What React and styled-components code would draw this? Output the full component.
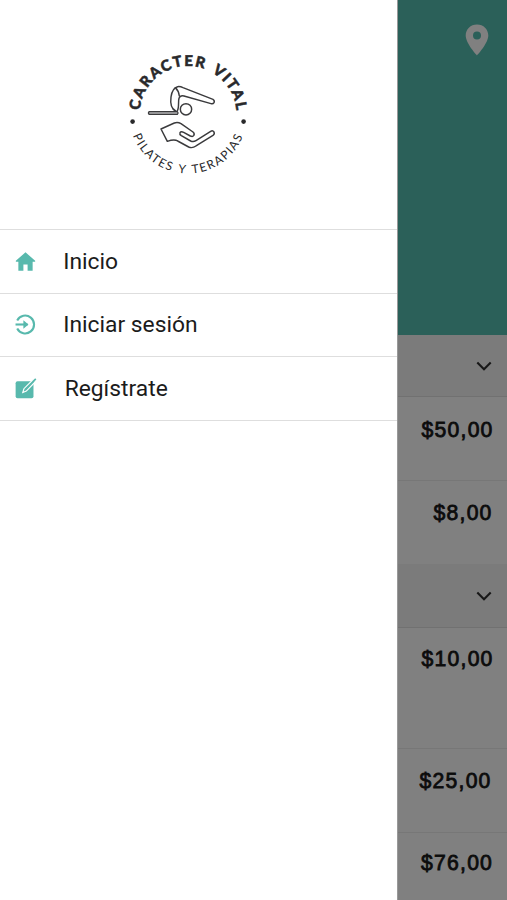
import styled, { createGlobalStyle } from "styled-components";

const GlobalStyle = createGlobalStyle`
  * { box-sizing: border-box; }
  body { margin: 0; background: #808080; overflow: hidden; }
`;

const opciones = [
  { titulo: "Inicio", icono: <IconoInicio /> },
  { titulo: "Iniciar sesión", icono: <IconoSesion /> },
  { titulo: "Regístrate", icono: <IconoRegistro />, sangria: 65 },
];

const secciones = [
  {
    alto: 62,
    precios: [
      { valor: "$50,00", alto: 84, margen: 14, arriba: 20 },
      { valor: "$8,00", alto: 83, margen: 15, sinBorde: true },
    ],
  },
  {
    alto: 64,
    precios: [
      { valor: "$10,00", alto: 121, margen: 14, arriba: 18 },
      { valor: "$25,00", alto: 84, margen: 16 },
      { valor: "$76,00", alto: 84, margen: 14.5, arriba: 17 },
    ],
  },
];

export default function App() {
  return (
    <>
      <GlobalStyle />
      <Pantalla>
        <Menu>
          <Cabecera>
            <Logo />
          </Cabecera>
          <Lista>
            {opciones.map((op) => (
              <Opcion key={op.titulo}>
                {op.icono}
                <Titulo $sangria={op.sangria}>{op.titulo}</Titulo>
              </Opcion>
            ))}
          </Lista>
        </Menu>
        <Fondo>
          <Portada>
            <IconoUbicacion />
          </Portada>
          {secciones.map((seccion, i) => (
            <section key={i}>
              <Encabezado $alto={seccion.alto}>
                <IconoFlecha />
              </Encabezado>
              {seccion.precios.map((p) => (
                <Precio
                  key={p.valor}
                  $alto={p.alto}
                  $margen={p.margen}
                  $arriba={p.arriba}
                  $sinBorde={p.sinBorde}
                >
                  {p.valor}
                </Precio>
              ))}
            </section>
          ))}
        </Fondo>
      </Pantalla>
    </>
  );
}

/* ── Iconos ────────────────────────────────────── */

function Logo() {
  return (
    <LogoSvg viewBox="0 0 136 136">
      <defs>
        <path
          id="arcoSuperior"
          d="M19.7 65.4 A48.5 48.5 0 0 1 68 21 A48.5 48.5 0 0 1 116.3 65.4"
        />
        <path id="arcoInferior" d="M12.9 90.6 A59 59 0 0 0 123.1 90.6" />
      </defs>
      <text fontSize="15" fontWeight="900" wordSpacing="2.5" stroke="#29292b" strokeWidth=".5">
        <textPath href="#arcoSuperior" textLength="144">CARACTER VITAL</textPath>
      </text>
      <text fontSize="12" wordSpacing="1.5">
        <textPath href="#arcoInferior" textLength="141">PILATES Y TERAPIAS</textPath>
      </text>
      <circle cx="12.6" cy="76.6" r="2.3" />
      <circle cx="123.6" cy="76.6" r="2.3" />
      <g
        transform="translate(25 35) scale(.3333)"
        fill="none"
        stroke="#3b3b3d"
        strokeWidth="4.4"
        strokeLinejoin="round"
        strokeLinecap="round"
      >
        <path d="M13 95H97Q101 99 97 103H13Q8 99 13 95Z" />
        <path d="M13 99H97" strokeWidth="2" stroke="#8a8a8c" />
        <path d="M92 93C78 86 76 66 78 51C80 36 85 23 98 20Q106 19 114 23L204 58Q210 62 207 68Q204 73 198 71L117 48Q106 45 102 55C99 65 103 83 97 92" />
        <path d="M91 23Q101 32 103 48" />
        <circle cx="123" cy="88" r="17" />
        <path d="M48 147L88 129Q98 125 108 131L144 156Q150 161 146 167Q143 171 136 168L116 157Q108 153 105 158Q103 163 109 167L137 183Q145 187 153 182L197 154Q203 150 207 156Q210 162 204 166L153 198Q142 206 131 201L98 183Q88 177 67 184Z" />
      </g>
    </LogoSvg>
  );
}

function IconoInicio() {
  return (
    <Icono viewBox="0 0 20 20">
      <path d="M10 1.2L19.2 9.4V10.2H16.8V18.8H12V12.8H8V18.8H3.2V10.2H.8V9.4Z" />
    </Icono>
  );
}

function IconoSesion() {
  return (
    <Icono viewBox="0 0 20 20">
      <g fill="none" stroke="#58b9ad" strokeWidth="2">
        <path d="M2.1 6.1A8.5 8.5 0 1 1 2.1 13.9" />
        <path d="M.5 10H12" />
        <path d="M8 6V14L12.8 10Z" fill="#58b9ad" stroke="none" />
      </g>
    </Icono>
  );
}

function IconoRegistro() {
  return (
    <Icono viewBox="0 0 20 20">
      <rect x=".6" y="3.2" width="17" height="16" rx="1.8" />
      <path d="M7.4 13.8L8.5 10.2L17.2 1.5L19.4 3.5L10.8 12.5Z" stroke="#fff" strokeWidth="1.1" />
      <path d="M17.4 3.2L19.8.8" stroke="#58b9ad" strokeWidth="1.6" />
    </Icono>
  );
}

function IconoUbicacion() {
  return (
    <svg width="24" height="32" viewBox="0 0 24 32">
      <path
        fill="#808080"
        fillRule="evenodd"
        d="M12 0.5C5.5.5.7 5.3.7 11.6C.7 19.5 12 31.5 12 31.5S23.3 19.5 23.3 11.6C23.3 5.3 18.5.5 12 .5ZM12 7.6A4 4 0 1 1 12 15.6A4 4 0 1 1 12 7.6Z"
      />
    </svg>
  );
}

function IconoFlecha() {
  return (
    <svg width="16" height="10" viewBox="0 0 16 10" fill="none" stroke="#171717" strokeWidth="2.1">
      <path d="M1.3 1.6L8 8.2L14.7 1.6" />
    </svg>
  );
}

/* ── Styled ────────────────────────────────────── */

const Pantalla = styled.div`
  display: flex;
  width: 507px;
  height: 900px;
  overflow: hidden;
`;

const Menu = styled.aside`
  width: 397px;
  flex-shrink: 0;
  background: #fff;
`;

const Cabecera = styled.header`
  height: 229px;
  padding: 45px 0 0 120px;
`;

const LogoSvg = styled.svg`
  display: block;
  width: 136px;
  height: 136px;
  fill: #29292b;
  font-family: Lato, sans-serif;
`;

const Lista = styled.nav`
  display: flex;
  flex-direction: column;
  border-top: 1.5px solid #dedede;
`;

const Opcion = styled.a`
  display: flex;
  align-items: center;
  height: 63.6px;
  padding-left: 15px;
  border-bottom: 1.5px solid #dedede;
`;

const Titulo = styled.span`
  margin-left: ${({ $sangria = 63.5 }) => $sangria - 36.3}px;
  padding-top: 1px;
  font-family: Roboto, sans-serif;
  font-size: 22.8px;
  line-height: 28px;
  color: #1b1b1b;
`;

const Icono = styled.svg`
  width: 21px;
  height: 21px;
  fill: #58b9ad;
  overflow: visible;
`;

const Fondo = styled.main`
  flex: 1;
  background: #808080;
  border-left: 1px solid #999;
`;

const Portada = styled.div`
  display: flex;
  justify-content: flex-end;
  height: 335px;
  padding: 24px 18px 0 0;
  background: #2b6059;
`;

const Encabezado = styled.div`
  display: flex;
  align-items: center;
  justify-content: flex-end;
  height: ${({ $alto }) => $alto}px;
  padding: 1px 15px 0 0;
  background: #7b7b7b;
  border-bottom: 1px solid #717171;
`;

const Precio = styled.div`
  height: ${({ $alto }) => $alto}px;
  padding: ${({ $arriba = 19 }) => $arriba}px ${({ $margen }) => $margen - 0.6}px 0 0;
  border-bottom: ${({ $sinBorde }) => ($sinBorde ? "none" : "1px solid #777")};
  text-align: right;
  font-family: "Liberation Sans", Arial, sans-serif;
  font-size: 21.2px;
  -webkit-text-stroke: 0.8px #0c0c0c;
  line-height: 26px;
  letter-spacing: 1.2px;
  color: #0c0c0c;
`;
